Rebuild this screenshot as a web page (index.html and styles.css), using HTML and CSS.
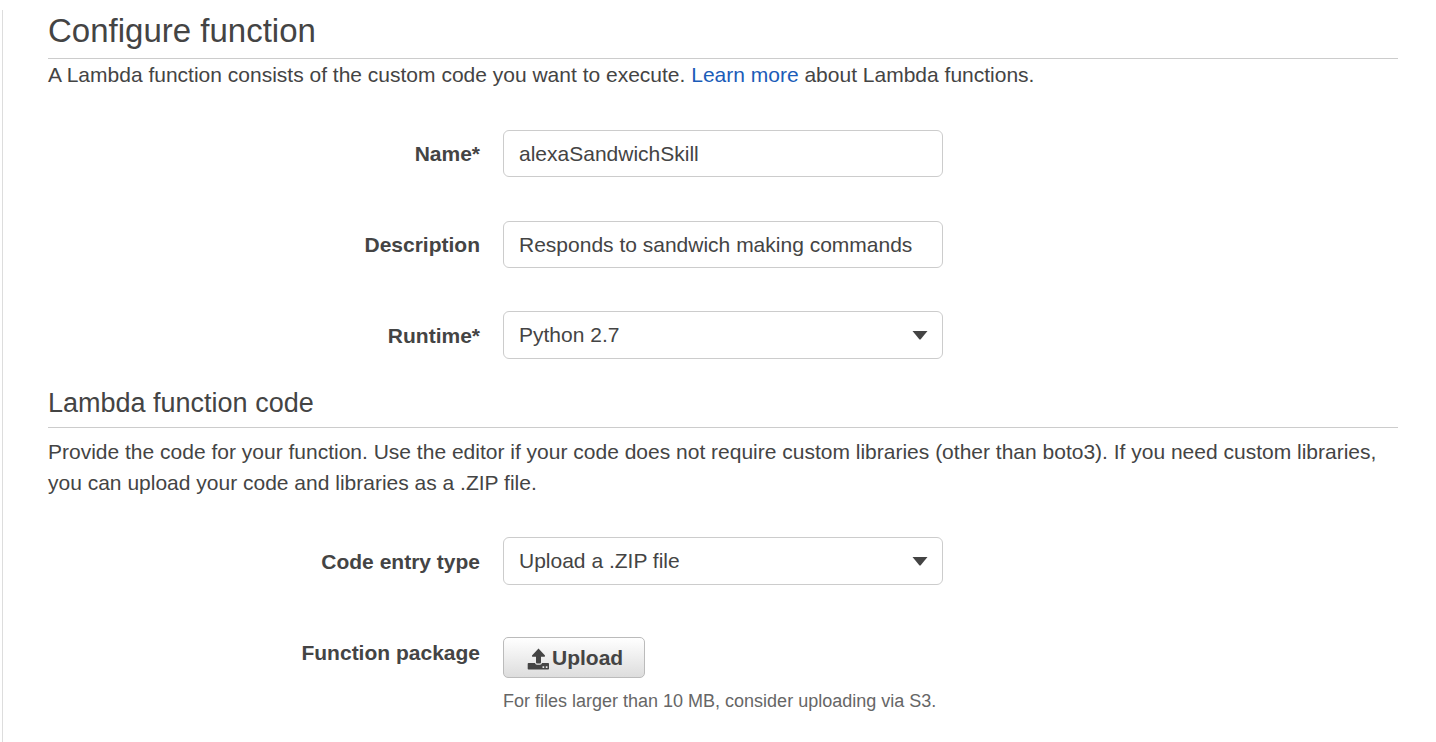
FILE: index.html
```html
<!DOCTYPE html>
<html lang="en">
<head>
<meta charset="utf-8">
<title>Configure function</title>
<link rel="stylesheet" href="styles.css">
</head>
<body>
<main class="panel">
  <section>
    <h1 class="title">Configure function</h1>
    <p class="intro">A Lambda function consists of the custom code you want to execute. <a class="link" href="#">Learn more</a> about Lambda functions.</p>
    <div class="fields">
      <div class="row">
        <label class="label" for="name">Name*</label>
        <input class="control" id="name" type="text" value="alexaSandwichSkill">
      </div>
      <div class="row">
        <label class="label" for="description">Description</label>
        <input class="control" id="description" type="text" value="Responds to sandwich making commands">
      </div>
      <div class="row">
        <label class="label" for="runtime">Runtime*</label>
        <div class="select-wrap">
          <select class="control select" id="runtime"><option>Python 2.7</option></select>
          <svg class="caret" viewBox="0 0 16 9" aria-hidden="true"><path d="M.5 0h15L8.500 8.500h-1z"/></svg>
        </div>
      </div>
    </div>
  </section>
  <section>
    <h2 class="subtitle">Lambda function code</h2>
    <p class="intro code-intro">Provide the code for your function. Use the editor if your code does not require custom libraries (other than boto3). If you need custom libraries, you can upload your code and libraries as a .ZIP file.</p>
    <div class="fields">
      <div class="row">
        <label class="label" for="entry">Code entry type</label>
        <div class="select-wrap">
          <select class="control select" id="entry"><option>Upload a .ZIP file</option></select>
          <svg class="caret" viewBox="0 0 16 9" aria-hidden="true"><path d="M.5 0h15L8.500 8.500h-1z"/></svg>
        </div>
      </div>
      <div class="row upload-row">
        <label class="label" for="upload">Function package</label>
        <div>
          <button class="upload" id="upload" type="button">
            <svg class="upload-icon" viewBox="0 0 22 24" aria-hidden="true"><path fill-rule="evenodd" d="M11.500 2.500L18 9.500q.3 1.200-.8 1.200H14V16.500q0 1-1 1h-3q-1 0-1-1V10.700H5.700Q4.600 10.700 5 9.500zM1.500 17H8q.3 1.700 2 1.700h3q1.700 0 2-1.700h6.200q.8 0 .8.8v5q0 .8-.8.8H1.500q-.8 0-.8-.8v-5q0-.8.8-.8zM15.500 20.300V22h1.700v-1.700zM18.800 20.300V22h1.700v-1.700z"/></svg>Upload
          </button>
          <p class="hint">For files larger than 10 MB, consider uploading via S3.</p>
        </div>
      </div>
    </div>
  </section>
</main>
</body>
</html>
```
FILE: styles.css
```css
* { box-sizing: border-box; }
body {
  margin: 0;
  background: #fff;
  color: #444;
  font: 21px/31px "Liberation Sans", Arial, sans-serif;
}
h1, h2, p { margin: 0; font-weight: 400; }
.panel {
  min-height: calc(100vh - 10px);
  margin: 10px 0 0 2px;
  padding: 0 38px 24px 45px;
  border-left: 1px solid #ddd;
}
.title {
  padding: 1px 0 7px;
  border-bottom: 1px solid #ccc;
  font-size: 33px;
  line-height: 40px;
}
.link { color: #1b5cb8; text-decoration: none; }
.fields { display: grid; gap: 44px; padding-top: 40px; }
.row {
  display: grid;
  grid-template-columns: 32% minmax(0, 440px);
  column-gap: 23px;
  align-items: center;
}
.label { font-weight: 700; text-align: right; }
.control {
  display: block;
  width: 100%;
  height: 47px;
  padding: 0 15px;
  border: 1px solid #ccc;
  border-radius: 6px;
  background: #fff;
  color: #444;
  font: inherit;
}
.select-wrap { position: relative; margin-top: -1px; }
.select { appearance: none; height: 48px; padding-bottom: 2px; }
.caret {
  position: absolute;
  top: 20px;
  right: 15px;
  width: 16px;
  height: 9px;
  fill: #444;
  pointer-events: none;
}
.subtitle {
  padding: 24px 0 4px;
  border-bottom: 1px solid #ccc;
  font-size: 27px;
  line-height: 40px;
}
.code-intro { padding-top: 8px; }
.upload-row { align-items: start; padding-top: 8px; }
.upload {
  display: flex;
  align-items: center;
  gap: 3px;
  height: 41px;
  padding: 0 21px 0 23px;
  border: 1px solid #bbb;
  border-radius: 5px;
  background: linear-gradient(#fff, #ddd);
  color: #444;
  font: inherit;
  font-weight: 700;
}
.upload-icon { width: 22px; height: 24px; fill: #444; }
.hint { padding-top: 8px; color: #666; font-size: 18px; }
```
